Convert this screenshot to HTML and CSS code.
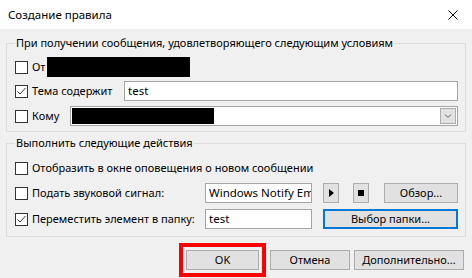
FILE: index.html
```html
<!DOCTYPE html>
<html lang="ru">
<head>
<meta charset="utf-8">
<title>Создание правила</title>
<link rel="stylesheet" href="styles.css">
</head>
<body>
<div class="window">
  <div class="titlebar">
    <span class="title">Создание правила</span>
    <svg class="close" width="10" height="10" viewBox="0 0 10 10"><path d="M0.5 0.5 L9.5 9.5 M9.5 0.5 L0.5 9.5" stroke="#000" stroke-width="1" fill="none"/></svg>
  </div>
  <div class="content">
    <fieldset class="group g1">
      <legend>При получении сообщения, удовлетворяющего следующим условиям</legend>
      <div class="row r1">
        <span class="cb"></span>
        <span class="lbl">От</span>
        <span class="redact redact-from"></span>
      </div>
      <div class="row r2">
        <span class="cb"><svg width="11" height="11" viewBox="0 0 11 11"><path d="M1.5 5.5 L4 8 L9.5 2" stroke="#333" stroke-width="1" fill="none"/></svg></span>
        <span class="lbl lbl-subj">Тема содержит</span>
        <div class="input grow">test</div>
      </div>
      <div class="row r3">
        <span class="cb"></span>
        <span class="lbl lbl-to">Кому</span>
        <div class="combo grow">
          <span class="redact redact-to"></span>
          <span class="dd"><svg width="16" height="16" viewBox="0 0 16 16"><path d="M4.5 6.5 L8 9.5 L11.5 6.5" stroke="#555" stroke-width="1" fill="none"/></svg></span>
        </div>
      </div>
    </fieldset>
    <fieldset class="group g2">
      <legend>Выполнить следующие действия</legend>
      <div class="row a1">
        <span class="cb"></span>
        <span class="lbl">Отобразить в окне оповещения о новом сообщении</span>
      </div>
      <div class="row a2">
        <span class="cb"></span>
        <span class="lbl lbl-act">Подать звуковой сигнал:</span>
        <div class="input field">Windows Notify Email.wav</div>
        <button class="btn sq play"><span class="tri"></span></button>
        <button class="btn sq stop"><span class="sqr"></span></button>
        <button class="btn browse">Обзор...</button>
      </div>
      <div class="row a3">
        <span class="cb"><svg width="11" height="11" viewBox="0 0 11 11"><path d="M1.5 5.5 L4 8 L9.5 2" stroke="#333" stroke-width="1" fill="none"/></svg></span>
        <span class="lbl lbl-act">Переместить элемент в папку:</span>
        <div class="input field">test</div>
        <button class="btn folder">Выбор папки...</button>
      </div>
    </fieldset>
    <div class="buttons">
      <button class="btn ok">OK</button>
      <button class="btn cancel">Отмена</button>
      <button class="btn more">Дополнительно...</button>
    </div>
  </div>
</div>
</body>
</html>
```
FILE: styles.css
```css
html, body {
  margin: 0;
  padding: 0;
}
body {
  width: 472px;
  height: 278px;
  overflow: hidden;
  background: #f0f0f0;
  font-family: "Noto Sans", "Liberation Sans", sans-serif;
  font-size: 11px;
  color: #000;
}
.window {
  width: 472px;
  height: 278px;
}
.titlebar {
  height: 29px;
  background: #fff;
  display: flex;
  align-items: center;
  padding: 0 14px 0 8px;
  font-size: 11.5px;
}
.title {
  flex: 1;
  line-height: 16px;
}
.close {
  display: block;
}
.group {
  margin: 0 6px;
  border: 1px solid #dcdcdc;
  min-width: 0;
  padding: 6px 7px 5px 8px;
}
.group legend {
  padding: 0 1px;
  line-height: 16px;
  height: 16px;
}
.g1 {
  margin-top: 6px;
}
.g2 {
  margin-top: 3px;
  padding-top: 7px;
  padding-bottom: 7px;
}
.row {
  display: flex;
  align-items: center;
  height: 20px;
}
.r2 { margin-top: 4px; }
.r3 { margin-top: 5px; }
.a2 { margin-top: 5px; }
.a3 { margin-top: 6px; }
.cb {
  flex: none;
  width: 13px;
  height: 13px;
  box-sizing: border-box;
  border: 1px solid #333;
  background: #fff;
  margin-right: 4px;
  display: flex;
  align-items: center;
  justify-content: center;
}
.cb svg { display: block; }
.lbl {
  flex: none;
  white-space: nowrap;
  line-height: 16px;
}
.lbl-subj { width: 92px; }
.lbl-to { width: 38px; }
.lbl-act { width: 173px; }
.redact {
  display: block;
  background: #000;
}
.redact-from {
  width: 143px;
  height: 20px;
  margin-left: 1px;
}
.grow {
  flex: 1;
  min-width: 0;
}
.input {
  height: 20px;
  box-sizing: border-box;
  border: 1px solid #a5a5a5;
  background: #fff;
  padding: 0 3px;
  line-height: 18px;
  white-space: nowrap;
  overflow: hidden;
  font-size: 11.5px;
}
.combo {
  height: 20px;
  box-sizing: border-box;
  border: 1px solid #a5a5a5;
  background: #fff;
  display: flex;
  align-items: stretch;
  padding: 1px;
}
.redact-to {
  width: 142px;
}
.dd {
  margin-left: auto;
  width: 16px;
  box-sizing: border-box;
  border: 1px solid #adadad;
  background: #e1e1e1;
  display: flex;
  align-items: center;
  justify-content: center;
}
.dd svg { display: block; }
.field {
  flex: none;
  width: 107px;
}
.btn {
  height: 20px;
  box-sizing: border-box;
  border: 1px solid #adadad;
  background: #e1e1e1;
  font: inherit;
  color: #000;
  padding: 0;
  display: flex;
  align-items: center;
  justify-content: center;
  line-height: 16px;
}
.sq {
  width: 16px;
  flex: none;
}
.play { margin-left: 11px; }
.stop { margin-left: 14px; }
.browse {
  margin-left: 15px;
  flex: 1;
}
.tri {
  width: 0;
  height: 0;
  border-top: 4px solid transparent;
  border-bottom: 4px solid transparent;
  border-left: 5px solid #000;
}
.sqr {
  width: 6px;
  height: 6px;
  background: #000;
}
.folder {
  margin-left: 11px;
  flex: 1;
  border: 2px solid #0078d7;
}
.buttons {
  display: flex;
  justify-content: flex-end;
  padding-right: 8px;
  margin-top: 13px;
}
.ok {
  width: 73px;
  outline: 4px solid #f00;
  outline-offset: 3px;
}
.cancel {
  width: 80px;
  margin-left: 11px;
}
.more {
  width: 110px;
  margin-left: 4px;
}
```
